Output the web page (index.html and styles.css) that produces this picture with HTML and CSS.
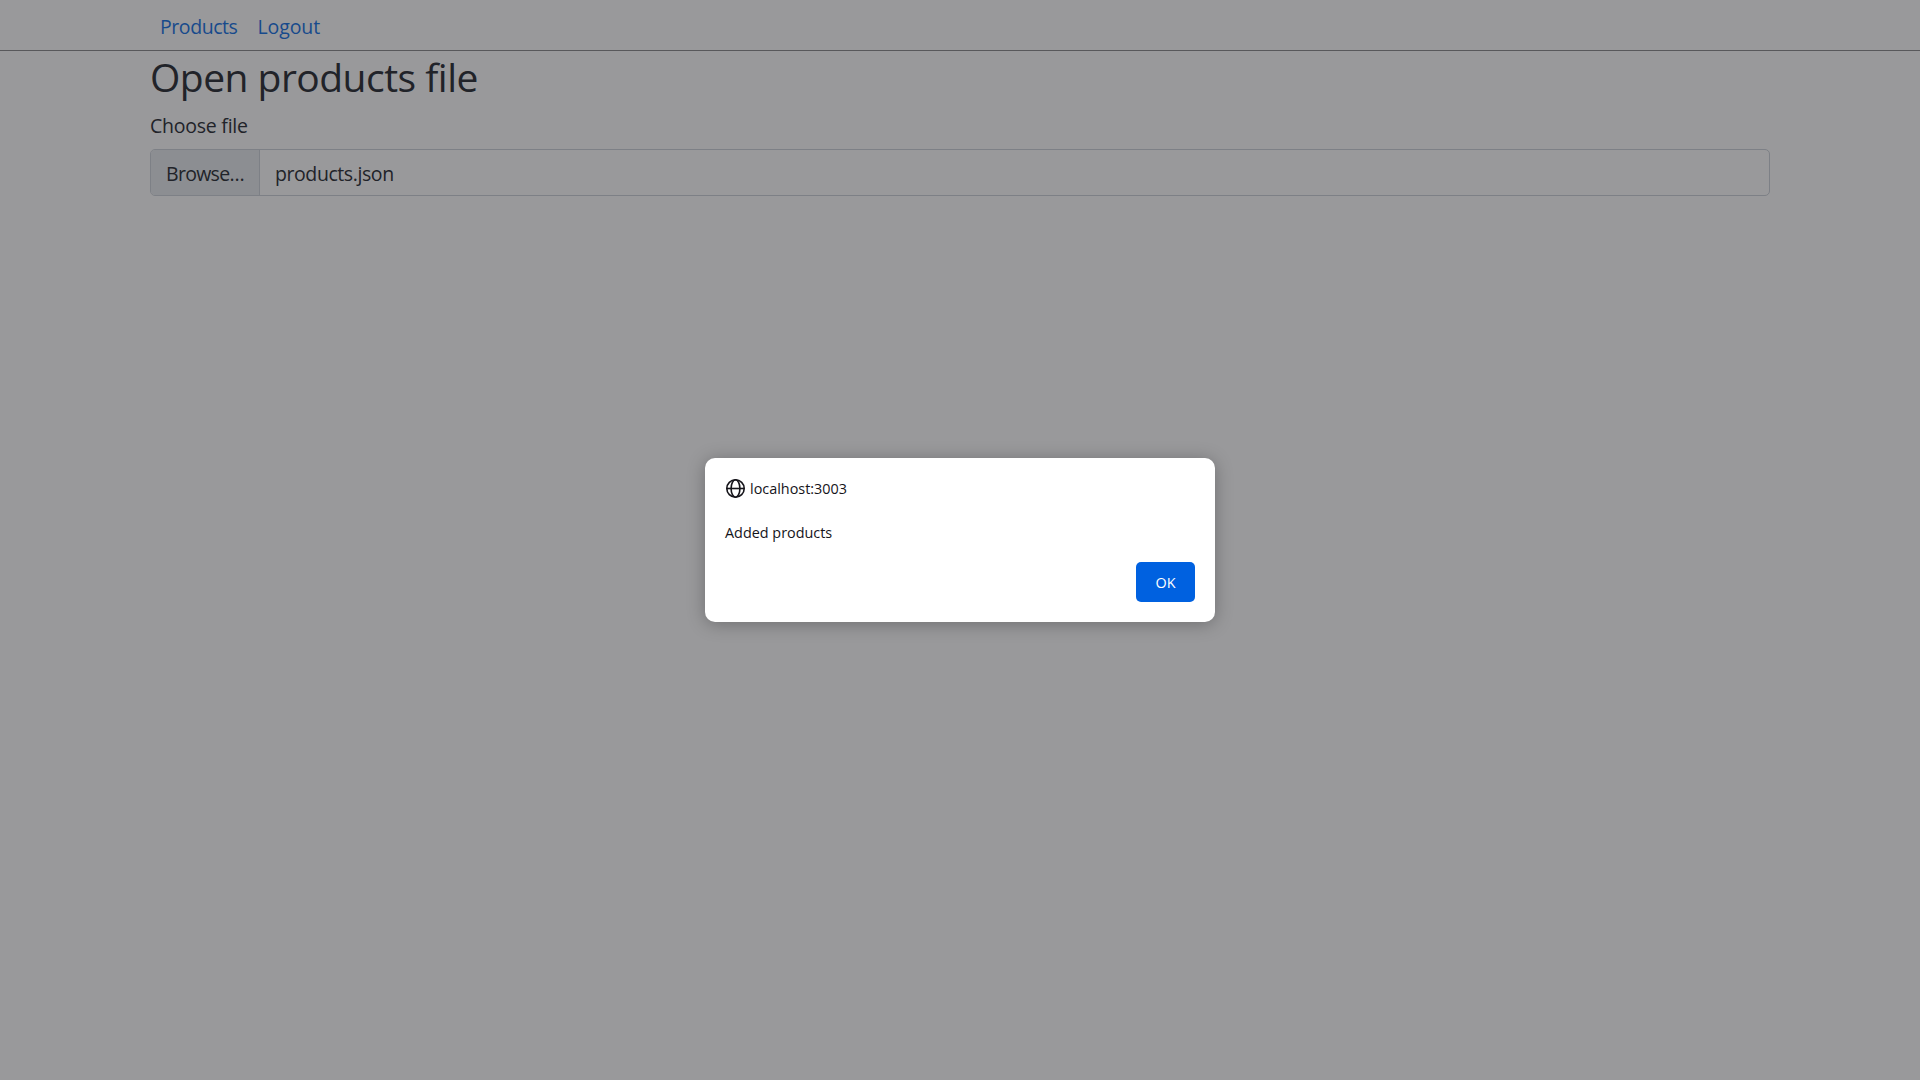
FILE: index.html
```
<!DOCTYPE html>
<html lang="en">
<head>
<meta charset="utf-8">
<title>Products</title>
<link rel="stylesheet" href="styles.css">
</head>
<body>
<nav class="navbar">
  <a class="nav-link" href="#">Products</a>
  <a class="nav-link logout" href="#">Logout</a>
</nav>
<main class="container">
  <h1 class="title">Open products file</h1>
  <div class="label">Choose file</div>
  <div class="file-input">
    <span class="browse">Browse…</span>
    <span class="filename">products.json</span>
  </div>
</main>
<div class="overlay">
  <section class="dialog" role="alertdialog">
    <header class="origin">
      <svg class="globe" viewBox="0 0 20 20" fill="none" stroke="#15141a" stroke-width="1.6">
        <circle cx="10.5" cy="10.5" r="8.7"/>
        <ellipse cx="10.5" cy="10.5" rx="4.4" ry="8.7"/>
        <path d="M1.8 10.5h17.4"/>
      </svg>
      <span class="host">localhost:3003</span>
    </header>
    <p class="message">Added products</p>
    <button class="ok">OK</button>
  </section>
</div>
</body>
</html>
```
FILE: styles.css
```
* { box-sizing: border-box; }
body {
  margin: 0;
  height: 1080px;
  overflow: hidden;
  background: #99999b;
  color: #212329;
  font-family: "Open Sans", "Noto Sans", sans-serif;
  font-size: 19.5px;
  line-height: 30px;
}
.navbar {
  display: flex;
  gap: 20px;
  height: 51px;
  padding: 12px 160px 0;
  border-bottom: 1px solid #58585b;
}
.nav-link { color: #174a8c; text-decoration: none; letter-spacing: -0.43px; }
.logout { letter-spacing: -0.1px; }
.container { padding: 0 150px; }
.title {
  margin: 0;
  height: 60px;
  padding-top: 2px;
  font-size: 39px;
  font-weight: 400;
  line-height: 48px;
  letter-spacing: -0.52px;
}
.label { height: 38px; letter-spacing: -0.24px; }
.file-input {
  display: flex;
  height: 47px;
  border: 1px solid #7d8086;
  border-radius: 5px;
  overflow: hidden;
  line-height: 47px;
}
.browse {
  width: 109px;
  padding-left: 15px;
  background: #8c8e92;
  border-right: 1px solid #7d8086;
  letter-spacing: -0.7px;
}
.filename { padding-left: 15px; letter-spacing: -0.42px; }
.overlay {
  position: absolute;
  inset: 0;
  display: flex;
  align-items: center;
  justify-content: center;
}
.dialog {
  display: flex;
  flex-direction: column;
  width: 510px;
  height: 164px;
  padding: 20px;
  border-radius: 10px;
  background: #fff;
  color: #15141a;
  box-shadow: 0 2px 18px rgba(0, 0, 0, .28);
  font-size: 14.4px;
  line-height: 20px;
}
.origin { display: flex; align-items: flex-start; height: 20px; gap: 5px; }
.globe { width: 20px; height: 20px; overflow: visible; }
.host { font-weight: 500; padding-top: 1px; }
.message { margin: 25px 0 0; height: 39px; }
.ok {
  align-self: flex-end;
  width: 59px;
  height: 40px;
  padding: 0;
  border: 0;
  border-radius: 5px;
  background: #0061e0;
  color: #fff;
  font: 500 14.4px "Open Sans", sans-serif;
}
```
